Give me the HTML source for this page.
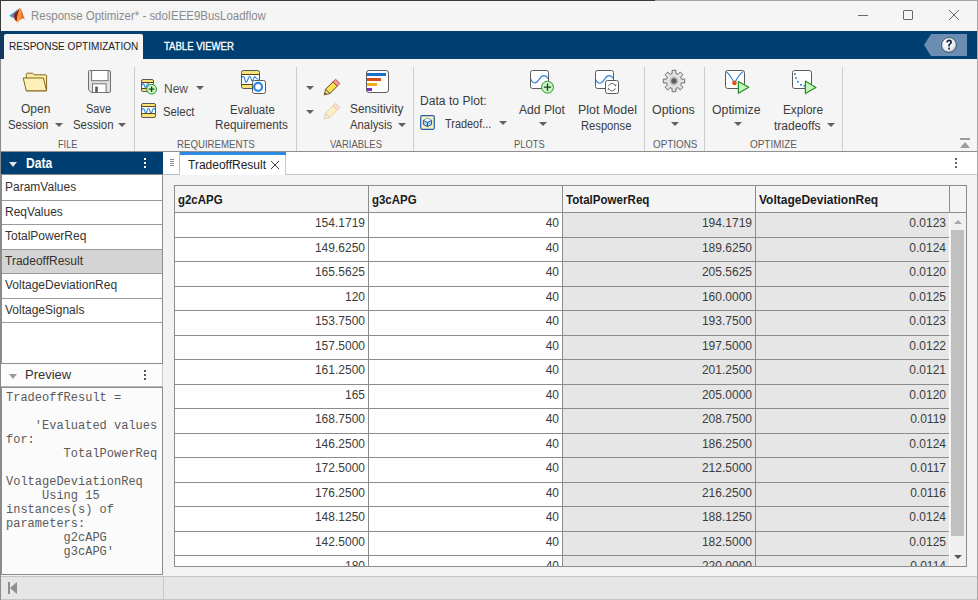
<!DOCTYPE html>
<html><head><meta charset="utf-8">
<style>
*{box-sizing:border-box;margin:0;padding:0}
html,body{width:978px;height:600px;overflow:hidden;background:#f5f5f5;font-family:"Liberation Sans",sans-serif}
.a{position:absolute}
.nw{white-space:nowrap}
.t{position:absolute;white-space:nowrap;font-size:12px;line-height:12px;color:#262626}
.dd{position:absolute;width:0;height:0;border-left:4px solid transparent;border-right:4px solid transparent;border-top:4px solid #616161}
.sep{position:absolute;top:67px;width:1px;height:84px;background:#cdcdcd}
.it{position:absolute;left:2px;width:160px;height:25px;background:#fff;border-bottom:1px solid #9a9a9a}
.it span{position:absolute;left:3px;top:5px;font-size:12px;line-height:12px;color:#333;white-space:nowrap}
.mono{font-family:"Liberation Mono",monospace;font-size:12px;line-height:14px;color:#5a5a5a;white-space:pre;position:absolute}
</style></head>
<body>

<div class="a" style="left:0;top:0;width:978px;height:1px;background:linear-gradient(90deg,#3a3a3a 0,#3a3a3a 655px,#a4a4a4 655px)"></div>
<div class="a" style="left:0;top:0;width:1px;height:600px;background:linear-gradient(#3c3c3c 0,#3c3c3c 31px,#1d3550 31px,#1d3550 59px,#8a8a8a 59px)"></div>
<div class="a" style="left:977px;top:0;width:1px;height:600px;background:#a8a8a8"></div>
<svg class="a" style="left:0;top:0" width="30" height="30" viewBox="0 0 30 30">
  <path d="M9.3 15.6 L13 13 L16.5 10.2 L18.3 9.6 L16.5 14 L14.2 17.6 L12.5 17.9 Z" fill="#4a98dc"/>
  <path d="M13.8 14.2 L17.5 10.5 L19.6 8 L18.6 14 L16.6 21.4 L14.4 19.2 Z" fill="#8e2516"/>
  <path d="M19.6 8 L21.2 9.6 L23.2 15 L24.9 19.4 L22.6 18.3 L19.6 20.2 L16.6 22.2 L17.2 17 Z" fill="#e2682a"/>
  <path d="M19.6 8 L20.6 10 L21.6 16 L19.8 20 L16.6 22.2 L17.6 15 Z" fill="#f49a36"/>
  <path d="M16.6 22.2 L19.8 20 L18.2 22.4Z" fill="#f8c03a"/>
</svg>

<div class="a nw" style="left:30.6px;top:10px;font:12.5px/13px 'Liberation Sans';color:#8a8a8a;transform:scaleX(0.9162);transform-origin:0 0;">Response Optimizer* - sdoIEEE9BusLoadflow</div>

<div class="a" style="left:858px;top:15px;width:10px;height:1px;background:#6a6a6a"></div>
<div class="a" style="left:903px;top:10px;width:10px;height:10px;border:1px solid #6a6a6a;border-radius:1px"></div>
<svg class="a" style="left:949px;top:10px" width="10" height="10" viewBox="0 0 10 10"><path d="M0 0 L10 10 M10 0 L0 10" stroke="#6a6a6a" stroke-width="1"/></svg>


<div class="a" style="left:1px;top:31px;width:976px;height:28px;background:#003f72"></div>
<div class="a" style="left:4px;top:34px;width:139px;height:25px;background:#f5f5f5;border-radius:2px 2px 0 0"></div>

<div class="a nw" style="left:8.8px;top:41px;font:11px/11px 'Liberation Sans';color:#202020;transform:scaleX(0.9129);transform-origin:0 0;">RESPONSE OPTIMIZATION</div>
<div class="a nw" style="left:164.6px;top:41px;font:11px/11px 'Liberation Sans';color:#ffffff;transform:scaleX(0.8672);transform-origin:0 0;margin-left:-0.8px;-webkit-text-stroke:0.35px #fff">TABLE VIEWER</div>

<svg class="a" style="left:924px;top:34px" width="44" height="22" viewBox="0 0 44 22">
  <defs><radialGradient id="hg" cx="0.4" cy="0.35" r="0.7"><stop offset="0" stop-color="#fff"/><stop offset="0.7" stop-color="#e8eaee"/><stop offset="1" stop-color="#9aa4b0"/></radialGradient></defs>
  <path d="M0 11 L7 0 H43 V22 H7Z" fill="#6a8db1"/>
  <circle cx="25" cy="11" r="7.4" fill="url(#hg)" stroke="#1e3550" stroke-width="0.7"/>
  <path d="M22.2 8.6 Q22.4 5.6 25.1 5.6 Q28 5.6 28 8.2 Q28 9.7 26.4 10.6 Q25.8 11 25.8 12.4 H24.1 Q24 10.4 25.2 9.6 Q26.1 9 26.1 8.2 Q26.1 7.2 25.1 7.2 Q24.1 7.2 24 8.6Z" fill="#1d2b3d"/>
  <rect x="24.1" y="13.6" width="1.8" height="1.8" fill="#1d2b3d"/>
</svg>


<div class="a" style="left:1px;top:151px;width:976px;height:1px;background:#8f8f8f"></div>
<div class="sep" style="left:134px"></div>
<div class="sep" style="left:296px"></div>
<div class="sep" style="left:413px"></div>
<div class="sep" style="left:644px"></div>
<div class="sep" style="left:704px"></div>
<div class="sep" style="left:842px"></div>


<svg class="a" style="left:22px;top:72px" width="27" height="21" viewBox="0 0 27 21">
  <path d="M4.3 3.5 V2.2 Q4.3 1.2 5.3 1.2 H10.5 L12.3 2.8 H23.6 Q24.6 2.8 24.6 3.8 V18.8 H4.3 Z" fill="#fbe9a6" stroke="#86681c" stroke-width="1"/>
  <path d="M1.2 6 H21.4 L24.6 18.8 H4.3 Z" fill="#fdf0b8" stroke="#86681c" stroke-width="1" stroke-linejoin="round"/>
</svg>
<svg class="a" style="left:87px;top:69px" width="25" height="25" viewBox="0 0 25 25">
  <path d="M2.5 1.5 H22 Q23.5 1.5 23.5 3 V22 Q23.5 23.5 22 23.5 H4.2 L1.5 20.8 V2.5 Q1.5 1.5 2.5 1.5Z" fill="#e2e2e2" stroke="#6e6e6e" stroke-width="1"/>
  <rect x="4.6" y="1.5" width="16.4" height="10.2" fill="#fff" stroke="#727272" stroke-width="1"/>
  <rect x="5.5" y="14.8" width="13.6" height="8.7" fill="#fff" stroke="#727272" stroke-width="1"/>
  <rect x="8.2" y="17.6" width="2.6" height="5.6" fill="#5a5a5a"/>
</svg>

<div class="a nw" style="left:21.2px;top:103px;font:12.5px/13px 'Liberation Sans';color:#3b3b3b;transform:scaleX(0.9603);transform-origin:0 0;">Open</div>
<div class="a nw" style="left:8.2px;top:120px;font:12.5px/13px 'Liberation Sans';color:#3b3b3b;transform:scaleX(0.9095);transform-origin:0 0;margin-top:-1px">Session</div>
<div class="dd" style="left:55px;top:123px"></div>
<div class="a nw" style="left:86.2px;top:103px;font:12.5px/13px 'Liberation Sans';color:#3b3b3b;transform:scaleX(0.8819);transform-origin:0 0;">Save</div>
<div class="a nw" style="left:72.8px;top:120px;font:12.5px/13px 'Liberation Sans';color:#3b3b3b;transform:scaleX(0.9118);transform-origin:0 0;margin-top:-1px">Session</div>
<div class="dd" style="left:118px;top:123px"></div>
<div class="a nw" style="left:58.4px;top:139px;font:10.5px/11px 'Liberation Sans';color:#5c5c5c;transform:scaleX(0.8736);transform-origin:0 0;">FILE</div>

<svg class="a" style="left:141px;top:79px" width="18" height="16" viewBox="0 0 18 16">
  <rect x="0.5" y="0.5" width="12" height="12" rx="1.5" fill="#f8e27a" stroke="#585858" stroke-width="1"/><rect x="1" y="3" width="11" height="7" fill="#fff"/><path d="M1 3.5 H12 M1 9.5 H12" stroke="#5e4210" stroke-width="1"/><path d="M1 6.5 C1.8 4, 2.6 4, 3.4 6.5 S5 9, 5.8 6.5 S7.4 4, 8.2 6.5 S9.8 9, 11.5 5.5" stroke="#2f86da" fill="none" stroke-width="1.1"/>
  <circle cx="10.6" cy="10.2" r="4.9" fill="#cdf3c6" stroke="#1f9a2a" stroke-width="1"/>
  <path d="M10.6 7.4 V13 M7.8 10.2 H13.4" stroke="#0c4a10" stroke-width="1.2"/>
</svg>
<svg class="a" style="left:141px;top:103px" width="16" height="16" viewBox="0 0 16 16">
  <rect x="0.5" y="0.5" width="14" height="14" rx="1.5" fill="#f8e27a" stroke="#585858" stroke-width="1"/><rect x="1" y="3" width="13" height="8" fill="#fff"/><path d="M1 3.5 H14 M1 10.5 H14" stroke="#5e4210" stroke-width="1"/><path d="M1 7.5 C1.9 4.5, 2.8 4.5, 3.6 7.5 S5.4 10.5, 6.2 7.5 S8 4.5, 8.8 7.5 S10.6 10.5, 11.4 7.5 S13.2 4.5, 14 7" stroke="#2f86da" fill="none" stroke-width="1.1"/>
</svg>
<svg class="a" style="left:241px;top:70px" width="25" height="25" viewBox="0 0 25 25">
  <rect x="0.5" y="0.5" width="18" height="18" rx="2" fill="#f8e27a" stroke="#585858" stroke-width="1"/><rect x="1" y="4" width="17" height="11" fill="#fff"/><path d="M1 4.5 H18 M1 14.5 H18" stroke="#5e4210" stroke-width="1"/><path d="M1.2 7.5 C2 5.5, 3 6, 4 10 C5 14, 6 12, 7.5 8 C8.5 5, 9.5 6, 10.5 10 C11.5 13, 12.5 8, 13.5 7 C14.5 6, 15.5 10, 17.5 9" stroke="#2f86da" fill="none" stroke-width="1.1"/>
  <rect x="11.5" y="10.5" width="13" height="13" rx="2" fill="#fff" stroke="#585858" stroke-width="1"/>
  <circle cx="17.1" cy="16.8" r="4" fill="none" stroke="#2a8ae6" stroke-width="2.2"/>
</svg>

<div class="a nw" style="left:163.6px;top:83px;font:12.5px/13px 'Liberation Sans';color:#505050;transform:scaleX(0.9583);transform-origin:0 0;">New</div>
<div class="dd" style="left:196px;top:86px"></div>
<div class="a nw" style="left:162.8px;top:106px;font:12.5px/13px 'Liberation Sans';color:#3b3b3b;transform:scaleX(0.9062);transform-origin:0 0;">Select</div>
<div class="a nw" style="left:230.4px;top:104px;font:12.5px/13px 'Liberation Sans';color:#3b3b3b;transform:scaleX(0.9213);transform-origin:0 0;">Evaluate</div>
<div class="a nw" style="left:215.4px;top:119px;font:12.5px/13px 'Liberation Sans';color:#3b3b3b;transform:scaleX(0.9351);transform-origin:0 0;">Requirements</div>
<div class="a nw" style="left:176.8px;top:139px;font:10.5px/11px 'Liberation Sans';color:#5c5c5c;transform:scaleX(0.9198);transform-origin:0 0;">REQUIREMENTS</div>

<div class="dd" style="left:306px;top:86px"></div>
<div class="dd" style="left:306px;top:110px"></div>
<svg class="a" style="left:323px;top:78px" width="18" height="18" viewBox="0 0 18 18">
  <path d="M2.5 11.3 L10 3.8 L14.3 8.1 L6.8 15.6Z" fill="#fde24e" stroke="#3e3410" stroke-width="0.9" stroke-linejoin="round"/>
  <path d="M10 3.8 L12.6 1.3 L16.9 5.5 L14.3 8.1Z" fill="#f99a9a" stroke="#b04848" stroke-width="0.9" stroke-linejoin="round"/>
  <path d="M2.5 11.3 L6.8 15.6 L1.2 16.9Z" fill="#f2e2b0" stroke="#6e5414" stroke-width="0.9" stroke-linejoin="round"/>
  <path d="M1.2 16.9 L2.6 14.4 L3.8 15.5Z" fill="#5a4410"/>
</svg>
<svg class="a" style="left:323px;top:102px" width="18" height="18" viewBox="0 0 18 18">
  <path d="M2.5 11.3 L10 3.8 L14.3 8.1 L6.8 15.6Z" fill="#faf0c4" stroke="#d8cca8" stroke-width="0.9" stroke-linejoin="round"/>
  <path d="M10 3.8 L12.6 1.3 L16.9 5.5 L14.3 8.1Z" fill="#fbdcd0" stroke="#e6c4b8" stroke-width="0.9" stroke-linejoin="round"/>
  <path d="M2.5 11.3 L6.8 15.6 L1.2 16.9Z" fill="#f6efe0" stroke="#d8ccb8" stroke-width="0.9" stroke-linejoin="round"/>
</svg>
<svg class="a" style="left:366px;top:70px" width="23" height="23" viewBox="0 0 23 23">
  <rect x="0.5" y="0.5" width="22" height="22" rx="2.5" fill="#fff" stroke="#5e5e5e" stroke-width="1"/>
  <rect x="1" y="3" width="19" height="3" fill="#1a6fc6"/>
  <rect x="1" y="8" width="14" height="3" fill="#d94e14"/>
  <rect x="1" y="13" width="10" height="3" fill="#eeb01c"/>
  <rect x="1" y="18" width="5" height="3" fill="#7b2bc4"/>
</svg>

<div class="a nw" style="left:350.4px;top:103px;font:12.5px/13px 'Liberation Sans';color:#3b3b3b;transform:scaleX(0.9492);transform-origin:0 0;">Sensitivity</div>
<div class="a nw" style="left:350.4px;top:119px;font:12.5px/13px 'Liberation Sans';color:#3b3b3b;transform:scaleX(0.9065);transform-origin:0 0;">Analysis</div>
<div class="dd" style="left:398px;top:123px"></div>
<div class="a nw" style="left:329.8px;top:139px;font:10.5px/11px 'Liberation Sans';color:#5c5c5c;transform:scaleX(0.9032);transform-origin:0 0;">VARIABLES</div>

<svg class="a" style="left:420px;top:115px" width="15" height="15" viewBox="0 0 15 15">
  <rect x="0.7" y="0.7" width="13.6" height="13.6" rx="1.5" fill="#fdf2b6" stroke="#1e5cb4" stroke-width="1.2"/>
  <path d="M7.5 3.3 L11.6 5.4 V9.5 L7.5 11.6 L3.4 9.5 V5.4Z" fill="#a8d4f8" stroke="#1a56ac" stroke-width="1" stroke-linejoin="round"/>
  <path d="M3.4 5.4 L7.5 3.3 L11.6 5.4 L7.5 7.5Z" fill="#f4f8ff"/>
  <path d="M3.4 5.4 L7.5 7.5 L11.6 5.4 M7.5 7.5 V11.6" fill="none" stroke="#1a56ac" stroke-width="1"/>
</svg>

<div class="a nw" style="left:420.2px;top:95px;font:12.5px/13px 'Liberation Sans';color:#3b3b3b;transform:scaleX(0.9687);transform-origin:0 0;">Data to Plot:</div>
<div class="a nw" style="left:444.6px;top:118px;font:12.5px/13px 'Liberation Sans';color:#3b3b3b;transform:scaleX(0.8731);transform-origin:0 0;">Tradeof...</div>
<div class="dd" style="left:499px;top:121px"></div>

<svg class="a" style="left:529px;top:69px" width="27" height="27" viewBox="0 0 27 27">
  <rect x="1.5" y="1.5" width="18" height="18" rx="2" fill="#fff" stroke="#5a5a5a" stroke-width="1"/>
  <path d="M1.7 9.6 C3.3 15, 7.3 15.2, 10.2 10.4 C13.1 5.6, 16.6 5.4, 19.1 9.6" stroke="#3584d8" fill="none" stroke-width="1.1"/>
  <circle cx="18.5" cy="18.2" r="5.9" fill="#cdf3c6" stroke="#1f9a2a" stroke-width="1"/>
  <path d="M18.5 14.6 V21.8 M14.9 18.2 H22.1" stroke="#0c4a10" stroke-width="1.3"/>
</svg>
<svg class="a" style="left:594px;top:69px" width="27" height="27" viewBox="0 0 27 27">
  <rect x="1.5" y="1.5" width="18" height="18" rx="2" fill="#fff" stroke="#5a5a5a" stroke-width="1"/>
  <path d="M2 11 C3.8 15.5, 7.5 15.2, 10.4 10.4 C13.3 5.6, 16.8 5.4, 19.4 9.6" stroke="#3584d8" fill="none" stroke-width="1.1"/>
  <rect x="11.5" y="11.5" width="13" height="13" rx="2" fill="#fff" stroke="#5a5a5a" stroke-width="1"/>
  <path d="M14.6 17.2 A3.7 3.7 0 0 1 21.4 16.4 M21.4 19.2 A3.7 3.7 0 0 1 14.6 20" fill="none" stroke="#707070" stroke-width="1"/>
  <path d="M20.2 15.6 L22.6 15.6 L21.4 17.8Z M13.4 20.8 L15.8 20.8 L14.6 18.6Z" fill="#707070"/>
</svg>

<div class="a nw" style="left:518.6px;top:104px;font:12.5px/13px 'Liberation Sans';color:#3b3b3b;transform:scaleX(0.9704);transform-origin:0 0;">Add Plot</div>
<div class="dd" style="left:539px;top:122px"></div>
<div class="a nw" style="left:577.6px;top:104px;font:12.5px/13px 'Liberation Sans';color:#3b3b3b;transform:scaleX(0.9984);transform-origin:0 0;">Plot Model</div>
<div class="a nw" style="left:581.2px;top:120px;font:12.5px/13px 'Liberation Sans';color:#3b3b3b;transform:scaleX(0.8946);transform-origin:0 0;">Response</div>
<div class="a nw" style="left:514.0px;top:139px;font:10.5px/11px 'Liberation Sans';color:#5c5c5c;transform:scaleX(0.8897);transform-origin:0 0;">PLOTS</div>

<svg class="a" style="left:661.5px;top:69.3px" width="24" height="24" viewBox="0 0 24 24">
  <defs><radialGradient id="gg" cx="0.5" cy="0.5" r="0.5"><stop offset="0" stop-color="#6a6a6a"/><stop offset="0.55" stop-color="#707070"/><stop offset="0.62" stop-color="#a8a8a8"/><stop offset="1" stop-color="#cfcfcf"/></radialGradient></defs>
  <path d="M10.07 4.55 L10.11 1.27 L13.89 1.27 L13.93 4.55 L15.91 5.37 L18.25 3.07 L20.93 5.75 L18.63 8.09 L19.45 10.07 L22.73 10.11 L22.73 13.89 L19.45 13.93 L18.63 15.91 L20.93 18.25 L18.25 20.93 L15.91 18.63 L13.93 19.45 L13.89 22.73 L10.11 22.73 L10.07 19.45 L8.09 18.63 L5.75 20.93 L3.07 18.25 L5.37 15.91 L4.55 13.93 L1.27 13.89 L1.27 10.11 L4.55 10.07 L5.37 8.09 L3.07 5.75 L5.75 3.07 L8.09 5.37Z" fill="#e2e2e2" stroke="#6c6c6c" stroke-width="1" stroke-linejoin="round"/>
  <circle cx="12" cy="12" r="4.4" fill="#bdbdbd"/><circle cx="12" cy="12" r="2.7" fill="#5e5e5e"/>
</svg>

<div class="a nw" style="left:652.2px;top:104px;font:12.5px/13px 'Liberation Sans';color:#3b3b3b;transform:scaleX(0.9934);transform-origin:0 0;">Options</div>
<div class="dd" style="left:671px;top:122px"></div>
<div class="a nw" style="left:652.6px;top:139px;font:10.5px/11px 'Liberation Sans';color:#5c5c5c;transform:scaleX(0.9378);transform-origin:0 0;">OPTIONS</div>

<svg class="a" style="left:724px;top:69px" width="27" height="27" viewBox="0 0 27 27">
  <rect x="1.5" y="1.5" width="19" height="18" rx="2.2" fill="#fff" stroke="#5a5a5a" stroke-width="1"/>
  <path d="M1.9 2.8 C5.5 4.3, 8.3 10.5, 10.5 14 C12.7 10.5, 15.5 4.3, 19.1 2.8" stroke="#3584d8" fill="none" stroke-width="1.1"/>
  <circle cx="10.5" cy="13.9" r="2.3" fill="#d9531a"/>
  <path d="M14.4 12.5 L24.8 18.3 L14.4 24.3Z" fill="#c8f8c0" stroke="#1f8f22" stroke-width="1.2" stroke-linejoin="round"/>
</svg>
<svg class="a" style="left:791px;top:69px" width="27" height="27" viewBox="0 0 27 27">
  <rect x="1.5" y="1.5" width="19" height="18" rx="2.2" fill="#fff" stroke="#5a5a5a" stroke-width="1"/>
  <rect x="3.2" y="4.2" width="1.7" height="1.7" fill="#2a7ad8"/>
  <rect x="4.1" y="8.2" width="1.7" height="1.7" fill="#2a7ad8"/>
  <rect x="6.1" y="11.9" width="1.7" height="1.7" fill="#2a7ad8"/>
  <rect x="9.1" y="15" width="1.7" height="1.7" fill="#2a7ad8"/>
  <rect x="12.6" y="16.1" width="1.7" height="1.7" fill="#2a7ad8"/>
  <path d="M14.4 12.1 L24.9 18.5 L14.4 24.6Z" fill="#c6f3bc" stroke="#1f8f22" stroke-width="1.2" stroke-linejoin="round"/>
</svg>

<div class="a nw" style="left:712.4px;top:104px;font:12.5px/13px 'Liberation Sans';color:#3b3b3b;transform:scaleX(0.9835);transform-origin:0 0;">Optimize</div>
<div class="dd" style="left:734px;top:122px"></div>
<div class="a nw" style="left:783.0px;top:104px;font:12.5px/13px 'Liberation Sans';color:#3b3b3b;transform:scaleX(0.9439);transform-origin:0 0;">Explore</div>
<div class="a nw" style="left:773.8px;top:120px;font:12.5px/13px 'Liberation Sans';color:#3b3b3b;transform:scaleX(0.9605);transform-origin:0 0;">tradeoffs</div>
<div class="dd" style="left:827px;top:123px"></div>
<div class="a nw" style="left:750.4px;top:139px;font:10.5px/11px 'Liberation Sans';color:#5c5c5c;transform:scaleX(0.9453);transform-origin:0 0;">OPTIMIZE</div>

<div class="a" style="left:960px;top:138px;width:10px;height:2px;background:#9c9c9c"></div>
<div class="a" style="left:960px;top:142px;width:0;height:0;border-left:5px solid transparent;border-right:5px solid transparent;border-bottom:6px solid #9c9c9c"></div>


<div class="a" style="left:1px;top:152px;width:976px;height:448px;background:#f3f3f3"></div>
<div class="a" style="left:1px;top:152px;width:162px;height:22px;background:#003f72"></div>
<div class="a" style="left:9px;top:162px;width:0;height:0;border-left:4px solid transparent;border-right:4px solid transparent;border-top:5px solid #dfe6ee"></div>
<div class="a nw" style="left:25.5px;top:156px;font:bold 14px/14px 'Liberation Sans';color:#fff;transform:scaleX(0.86);transform-origin:0 0">Data</div>
<div class="a" style="left:144px;top:158px;width:2px;height:2px;background:#fff"></div>
<div class="a" style="left:144px;top:162px;width:2px;height:2px;background:#fff"></div>
<div class="a" style="left:144px;top:166px;width:2px;height:2px;background:#fff"></div>

<div class="a" style="left:1px;top:174px;width:162px;height:190px;background:#fff;border:1px solid #8c8c8c"></div>
<div class="it" style="top:175px;height:26px"><span style="top:6px">ParamValues</span></div>
<div class="it" style="top:201px;height:24px"><span>ReqValues</span></div>
<div class="it" style="top:225px;height:25px"><span>TotalPowerReq</span></div>
<div class="it" style="top:250px;height:24px;background:#d4d4d4"><span>TradeoffResult</span></div>
<div class="it" style="top:274px;height:25px"><span>VoltageDeviationReq</span></div>
<div class="it" style="top:299px;height:24px"><span>VoltageSignals</span></div>

<div class="a" style="left:1px;top:364px;width:162px;height:23px;background:#fcfcfc;border-bottom:1px solid #b8b8b8;border-right:1px solid #c8c8c8"></div>
<div class="a" style="left:9px;top:374px;width:0;height:0;border-left:4px solid transparent;border-right:4px solid transparent;border-top:5px solid #9a9a9a"></div>
<div class="a nw" style="left:25px;top:368px;font:13px/13px 'Liberation Sans';color:#333">Preview</div>
<div class="a" style="left:144px;top:370px;width:2px;height:2px;background:#555"></div>
<div class="a" style="left:144px;top:374px;width:2px;height:2px;background:#555"></div>
<div class="a" style="left:144px;top:378px;width:2px;height:2px;background:#555"></div>
<div class="a" style="left:1px;top:387px;width:162px;height:188px;background:#fbfbfb;border:1px solid #8c8c8c;overflow:hidden">
<div class="mono" style="left:4px;top:3px">TradeoffResult =

    'Evaluated values
for:
        TotalPowerReq

VoltageDeviationReq
     Using 15
instances(s) of
parameters:
        g2cAPG
        g3cAPG'</div></div>

<div class="a" style="left:1px;top:576px;width:976px;height:24px;background:#e6e6e6;border-top:1px solid #c4c4c4"></div>
<div class="a" style="left:163px;top:577px;width:1px;height:23px;background:#c8c8c8"></div>
<div class="a" style="left:8px;top:582px;width:2px;height:12px;background:#8e8e8e"></div>
<div class="a" style="left:10px;top:582px;width:0;height:0;border-top:6px solid transparent;border-bottom:6px solid transparent;border-right:7px solid #8e8e8e"></div>
<div class="a" style="left:1px;top:599px;width:976px;height:1px;background:#c4c4c4"></div>

<div class="a" style="left:163px;top:152px;width:814px;height:23px;background:#fff;border-bottom:1px solid #c8c8c8"></div>
<div class="a" style="left:163px;top:152px;width:17px;height:23px;background:#fff;border-right:1px solid #bdbdbd;border-bottom:1px solid #bdbdbd;border-radius:0 0 2px 0"></div>
<div class="a" style="left:170px;top:159px;width:4px;height:1px;background:#888"></div>
<div class="a" style="left:170px;top:161px;width:4px;height:1px;background:#888"></div>
<div class="a" style="left:170px;top:163px;width:4px;height:1px;background:#888"></div>
<div class="a" style="left:170px;top:165px;width:4px;height:1px;background:#888"></div>
<div class="a" style="left:180px;top:152px;width:106px;height:23px;background:#fff;border-right:1px solid #c8c8c8"></div>
<div class="a" style="left:180px;top:152px;width:106px;height:3px;background:#2d8ae0"></div>
<div class="t" style="left:188px;top:159px;color:#222">TradeoffResult</div>
<svg class="a" style="left:271px;top:161px" width="8" height="8" viewBox="0 0 8 8"><path d="M0 0 L8 8 M8 0 L0 8" stroke="#3a3a3a" stroke-width="1"/></svg>
<div class="a" style="left:955px;top:158px;width:2px;height:2px;background:#666"></div>
<div class="a" style="left:955px;top:162px;width:2px;height:2px;background:#666"></div>
<div class="a" style="left:955px;top:166px;width:2px;height:2px;background:#666"></div>
<div class="a" style="left:174px;top:185px;width:793px;height:382px;background:#fff;border:1px solid #8c8c8c"></div>

<div class="a" style="left:175px;top:186px;width:791px;height:380px;overflow:hidden">
<div class="a" style="left:0;top:0;width:791px;height:26px;background:#f4f4f4"></div>
<div class="t" style="left:3px;top:8px;font-weight:bold;color:#1a1a1a;transform:scaleX(0.955);transform-origin:0 0">g2cAPG</div>
<div class="t" style="left:197px;top:8px;font-weight:bold;color:#1a1a1a;transform:scaleX(0.955);transform-origin:0 0">g3cAPG</div>
<div class="t" style="left:391px;top:8px;font-weight:bold;color:#1a1a1a;transform:scaleX(0.965);transform-origin:0 0">TotalPowerReq</div>
<div class="t" style="left:584px;top:8px;font-weight:bold;color:#1a1a1a;transform:scaleX(1.0);transform-origin:0 0">VoltageDeviationReq</div>
<div class="a" style="left:388px;top:27px;width:386px;height:400px;background:#e6e6e6"></div>
<div class="t" style="left:-1px;width:191px;text-align:right;top:31px;color:#3c3c3c">154.1719</div>
<div class="t" style="left:193px;width:191px;text-align:right;top:31px;color:#3c3c3c">40</div>
<div class="t" style="left:387px;width:190px;text-align:right;top:31px;color:#3c3c3c">194.1719</div>
<div class="t" style="left:580px;width:191px;text-align:right;top:31px;color:#3c3c3c">0.0123</div>
<div class="a" style="left:0;top:51px;width:774px;height:1px;background:#8c8c8c"></div>
<div class="t" style="left:-1px;width:191px;text-align:right;top:56px;color:#3c3c3c">149.6250</div>
<div class="t" style="left:193px;width:191px;text-align:right;top:56px;color:#3c3c3c">40</div>
<div class="t" style="left:387px;width:190px;text-align:right;top:56px;color:#3c3c3c">189.6250</div>
<div class="t" style="left:580px;width:191px;text-align:right;top:56px;color:#3c3c3c">0.0124</div>
<div class="a" style="left:0;top:75px;width:774px;height:1px;background:#8c8c8c"></div>
<div class="t" style="left:-1px;width:191px;text-align:right;top:80px;color:#3c3c3c">165.5625</div>
<div class="t" style="left:193px;width:191px;text-align:right;top:80px;color:#3c3c3c">40</div>
<div class="t" style="left:387px;width:190px;text-align:right;top:80px;color:#3c3c3c">205.5625</div>
<div class="t" style="left:580px;width:191px;text-align:right;top:80px;color:#3c3c3c">0.0120</div>
<div class="a" style="left:0;top:100px;width:774px;height:1px;background:#8c8c8c"></div>
<div class="t" style="left:-1px;width:191px;text-align:right;top:105px;color:#3c3c3c">120</div>
<div class="t" style="left:193px;width:191px;text-align:right;top:105px;color:#3c3c3c">40</div>
<div class="t" style="left:387px;width:190px;text-align:right;top:105px;color:#3c3c3c">160.0000</div>
<div class="t" style="left:580px;width:191px;text-align:right;top:105px;color:#3c3c3c">0.0125</div>
<div class="a" style="left:0;top:124px;width:774px;height:1px;background:#8c8c8c"></div>
<div class="t" style="left:-1px;width:191px;text-align:right;top:129px;color:#3c3c3c">153.7500</div>
<div class="t" style="left:193px;width:191px;text-align:right;top:129px;color:#3c3c3c">40</div>
<div class="t" style="left:387px;width:190px;text-align:right;top:129px;color:#3c3c3c">193.7500</div>
<div class="t" style="left:580px;width:191px;text-align:right;top:129px;color:#3c3c3c">0.0123</div>
<div class="a" style="left:0;top:149px;width:774px;height:1px;background:#8c8c8c"></div>
<div class="t" style="left:-1px;width:191px;text-align:right;top:154px;color:#3c3c3c">157.5000</div>
<div class="t" style="left:193px;width:191px;text-align:right;top:154px;color:#3c3c3c">40</div>
<div class="t" style="left:387px;width:190px;text-align:right;top:154px;color:#3c3c3c">197.5000</div>
<div class="t" style="left:580px;width:191px;text-align:right;top:154px;color:#3c3c3c">0.0122</div>
<div class="a" style="left:0;top:173px;width:774px;height:1px;background:#8c8c8c"></div>
<div class="t" style="left:-1px;width:191px;text-align:right;top:178px;color:#3c3c3c">161.2500</div>
<div class="t" style="left:193px;width:191px;text-align:right;top:178px;color:#3c3c3c">40</div>
<div class="t" style="left:387px;width:190px;text-align:right;top:178px;color:#3c3c3c">201.2500</div>
<div class="t" style="left:580px;width:191px;text-align:right;top:178px;color:#3c3c3c">0.0121</div>
<div class="a" style="left:0;top:198px;width:774px;height:1px;background:#8c8c8c"></div>
<div class="t" style="left:-1px;width:191px;text-align:right;top:203px;color:#3c3c3c">165</div>
<div class="t" style="left:193px;width:191px;text-align:right;top:203px;color:#3c3c3c">40</div>
<div class="t" style="left:387px;width:190px;text-align:right;top:203px;color:#3c3c3c">205.0000</div>
<div class="t" style="left:580px;width:191px;text-align:right;top:203px;color:#3c3c3c">0.0120</div>
<div class="a" style="left:0;top:222px;width:774px;height:1px;background:#8c8c8c"></div>
<div class="t" style="left:-1px;width:191px;text-align:right;top:227px;color:#3c3c3c">168.7500</div>
<div class="t" style="left:193px;width:191px;text-align:right;top:227px;color:#3c3c3c">40</div>
<div class="t" style="left:387px;width:190px;text-align:right;top:227px;color:#3c3c3c">208.7500</div>
<div class="t" style="left:580px;width:191px;text-align:right;top:227px;color:#3c3c3c">0.0119</div>
<div class="a" style="left:0;top:247px;width:774px;height:1px;background:#8c8c8c"></div>
<div class="t" style="left:-1px;width:191px;text-align:right;top:252px;color:#3c3c3c">146.2500</div>
<div class="t" style="left:193px;width:191px;text-align:right;top:252px;color:#3c3c3c">40</div>
<div class="t" style="left:387px;width:190px;text-align:right;top:252px;color:#3c3c3c">186.2500</div>
<div class="t" style="left:580px;width:191px;text-align:right;top:252px;color:#3c3c3c">0.0124</div>
<div class="a" style="left:0;top:271px;width:774px;height:1px;background:#8c8c8c"></div>
<div class="t" style="left:-1px;width:191px;text-align:right;top:276px;color:#3c3c3c">172.5000</div>
<div class="t" style="left:193px;width:191px;text-align:right;top:276px;color:#3c3c3c">40</div>
<div class="t" style="left:387px;width:190px;text-align:right;top:276px;color:#3c3c3c">212.5000</div>
<div class="t" style="left:580px;width:191px;text-align:right;top:276px;color:#3c3c3c">0.0117</div>
<div class="a" style="left:0;top:296px;width:774px;height:1px;background:#8c8c8c"></div>
<div class="t" style="left:-1px;width:191px;text-align:right;top:301px;color:#3c3c3c">176.2500</div>
<div class="t" style="left:193px;width:191px;text-align:right;top:301px;color:#3c3c3c">40</div>
<div class="t" style="left:387px;width:190px;text-align:right;top:301px;color:#3c3c3c">216.2500</div>
<div class="t" style="left:580px;width:191px;text-align:right;top:301px;color:#3c3c3c">0.0116</div>
<div class="a" style="left:0;top:320px;width:774px;height:1px;background:#8c8c8c"></div>
<div class="t" style="left:-1px;width:191px;text-align:right;top:325px;color:#3c3c3c">148.1250</div>
<div class="t" style="left:193px;width:191px;text-align:right;top:325px;color:#3c3c3c">40</div>
<div class="t" style="left:387px;width:190px;text-align:right;top:325px;color:#3c3c3c">188.1250</div>
<div class="t" style="left:580px;width:191px;text-align:right;top:325px;color:#3c3c3c">0.0124</div>
<div class="a" style="left:0;top:345px;width:774px;height:1px;background:#8c8c8c"></div>
<div class="t" style="left:-1px;width:191px;text-align:right;top:350px;color:#3c3c3c">142.5000</div>
<div class="t" style="left:193px;width:191px;text-align:right;top:350px;color:#3c3c3c">40</div>
<div class="t" style="left:387px;width:190px;text-align:right;top:350px;color:#3c3c3c">182.5000</div>
<div class="t" style="left:580px;width:191px;text-align:right;top:350px;color:#3c3c3c">0.0125</div>
<div class="a" style="left:0;top:369px;width:774px;height:1px;background:#8c8c8c"></div>
<div class="t" style="left:-1px;width:191px;text-align:right;top:374px;color:#3c3c3c">180</div>
<div class="t" style="left:193px;width:191px;text-align:right;top:374px;color:#3c3c3c">40</div>
<div class="t" style="left:387px;width:190px;text-align:right;top:374px;color:#3c3c3c">220.0000</div>
<div class="t" style="left:580px;width:191px;text-align:right;top:374px;color:#3c3c3c">0.0114</div>
<div class="a" style="left:193px;top:0;width:1px;height:400px;background:#8c8c8c"></div>
<div class="a" style="left:387px;top:0;width:1px;height:400px;background:#8c8c8c"></div>
<div class="a" style="left:580px;top:0;width:1px;height:400px;background:#8c8c8c"></div>
<div class="a" style="left:775px;top:27px;width:16px;height:400px;background:#f0f0f0"></div>
<div class="a" style="left:774px;top:0;width:1px;height:26px;background:#8c8c8c"></div>
<div class="a" style="left:0;top:26px;width:791px;height:1px;background:#8c8c8c"></div>
<div class="a" style="left:776px;top:44px;width:13px;height:306px;background:#c0c0c0"></div>
<div class="a" style="left:779px;top:34px;width:0;height:0;border-left:4px solid transparent;border-right:4px solid transparent;border-bottom:4px solid #a8a8a8"></div>
<div class="a" style="left:779px;top:369px;width:0;height:0;border-left:4px solid transparent;border-right:4px solid transparent;border-top:4px solid #555"></div>
</div>
</body></html>
